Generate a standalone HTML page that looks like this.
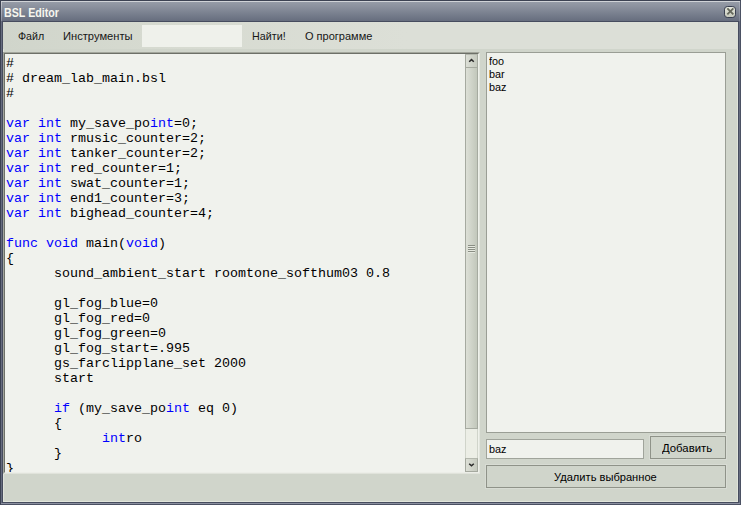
<!DOCTYPE html>
<html><head><meta charset="utf-8">
<style>
html,body{margin:0;padding:0;}
body{width:741px;height:505px;overflow:hidden;position:relative;background:#d0d5cb;font-family:"Liberation Sans","DejaVu Sans",sans-serif;font-size:12px;color:#111;}
.abs{position:absolute;box-sizing:border-box;}
#frame{left:0;top:0;width:741px;height:505px;background:#3c4252;border:1px solid;border-color:#3c4252 #4b5163 #4b5163 #3c4252;}
#frame2{left:1px;top:1px;width:739px;height:503px;background:#666c7f;}
#frame3{left:2px;top:21px;width:737px;height:482px;background:#464c5e;}
#title{left:1px;top:1px;width:739px;height:20px;background:linear-gradient(#d0d3d7 0,#d0d3d7 1px,#969ca7 1px,#8a909d 6px,#666d7e 100%);}
#tl{left:1px;top:2px;width:1px;height:19px;background:linear-gradient(#c4c7cd,#8a8fa0);}
#tr{left:739px;top:2px;width:1px;height:19px;background:linear-gradient(#aaaeb8,#7d8394);}
#bl{left:1px;top:503px;width:739px;height:1px;background:#8b90a0;}
#titletext{left:4px;top:6px;color:#f6f6ee;font-weight:bold;font-size:12px;line-height:15px;white-space:nowrap;transform:scaleX(0.89);transform-origin:0 0;}
#close{left:724px;top:6px;width:12px;height:12px;border:1px solid #3a4051;border-radius:3.5px;background:linear-gradient(#e6e8de,#d2d5c9 60%,#c4c7bb);}
#client{left:3px;top:22px;width:735px;height:480px;background:#d0d5cb;border:1px solid;border-color:#e2e5dd #dfe3d9 #e2e6dc #e0e3da;}
#menu{left:3px;top:22px;width:735px;height:27px;background:linear-gradient(90deg,#d0d5cb 0,#d6dad0 20%,#dcdfd7 55%,#dcdfd7 100%);}
.mi{top:29px;font-size:11.5px;line-height:15px;white-space:nowrap;color:#161616;transform-origin:0 0;}
#mbox{left:142px;top:25px;width:100px;height:22px;background:#eff1eb;}
#editor{left:3px;top:52px;width:477px;height:422px;background:#f0f2ed;border:1px solid;border-color:#a3a69c #e2e5dd #e0e3db #a3a69c;}
#editor2{left:4px;top:53px;width:475px;height:420px;border:1px solid;border-color:#6d7068 #eff1eb #eceee8 #6d7068;}
#code{left:6px;top:56px;margin:0;font-family:"Liberation Mono","DejaVu Sans Mono",monospace;font-size:13.33px;line-height:15px;color:#000;white-space:pre;tab-size:6;-moz-tab-size:6;height:416px;overflow:hidden;}
#code b{font-weight:normal;color:#0000ff;}
#sb{left:465px;top:54px;width:13px;height:418px;background:#eceee6;border:1px solid;border-color:#e6e9e1 #d0d4ca;border-width:0 1px;}
.sbtn{left:465px;width:13px;height:14px;background:linear-gradient(90deg,#dcdfd6,#c6cabf);border:1px solid #a5a99f;border-top-color:#b4b8ae;}
#thumb{left:465px;top:67px;width:13px;height:362px;background:linear-gradient(90deg,#dde0d7,#c2c7bb);border:1px solid #a6aaa0;}
.grip{left:468px;width:7px;height:1px;background:#8a8e84;box-shadow:0 1px 0 #e6e9e0;}
#list{left:486px;top:52px;width:240px;height:381px;background:#f0f2ed;border:1px solid #9a9e95;}
.li{left:489px;font-size:11.5px;line-height:13px;color:#000;white-space:nowrap;transform:scaleX(0.94);transform-origin:0 0;}
#inp{left:486px;top:439px;width:158px;height:20px;background:#f0f2ed;border:1px solid #a0a49b;}
.btn{border:1px solid #8f9389;background:#d0d5cb;box-shadow:0 0 0 1px rgba(255,255,255,0.18);}
.bt{font-size:11px;line-height:13px;color:#000;white-space:nowrap;transform-origin:0 0;}
</style></head><body>
<div class="abs" id="frame"></div>
<div class="abs" id="frame2"></div>
<div class="abs" id="frame3"></div>
<div class="abs" id="title"></div>
<div class="abs" id="tl"></div>
<div class="abs" id="tr"></div>
<div class="abs" id="bl"></div>
<div class="abs" id="titletext">BSL Editor</div>
<div class="abs" id="close"><svg width="10" height="10" viewBox="0 0 10 10" style="position:absolute;left:0;top:0"><path d="M2.35 1.45 L8.35 7.45 M8.35 1.45 L2.35 7.45" stroke="#64675b" stroke-width="1.8" fill="none"/></svg></div>
<div class="abs" id="client"></div>
<div class="abs" id="menu"></div>
<div class="abs mi" style="left:18px;transform:scaleX(0.929)">Файл</div>
<div class="abs mi" style="left:63px;transform:scaleX(0.97)">Инструменты</div>
<div class="abs" id="mbox"></div>
<div class="abs mi" style="left:252px;transform:scaleX(0.934)">Найти!</div>
<div class="abs mi" style="left:305px;transform:scaleX(0.957)">О программе</div>
<div class="abs" id="editor"></div>
<div class="abs" id="editor2"></div>
<pre class="abs" id="code">#
# dream_lab_main.bsl
#

<b>var</b> <b>int</b> my_save_po<b>int</b>=0;
<b>var</b> <b>int</b> rmusic_counter=2;
<b>var</b> <b>int</b> tanker_counter=2;
<b>var</b> <b>int</b> red_counter=1;
<b>var</b> <b>int</b> swat_counter=1;
<b>var</b> <b>int</b> end1_counter=3;
<b>var</b> <b>int</b> bighead_counter=4;

<b>func</b> <b>void</b> main(<b>void</b>)
{
	sound_ambient_start roomtone_softhum03 0.8

	gl_fog_blue=0
	gl_fog_red=0
	gl_fog_green=0
	gl_fog_start=.995
	gs_farclipplane_set 2000
	start

	<b>if</b> (my_save_po<b>int</b> eq 0)
	{
		<b>int</b>ro
	}
}</pre>
<div class="abs" id="sb"></div>
<div class="abs sbtn" style="top:54px"></div>
<div class="abs" id="thumb"></div>
<div class="abs grip" style="top:245px"></div>
<div class="abs grip" style="top:247px"></div>
<div class="abs grip" style="top:249px"></div>
<div class="abs grip" style="top:251px"></div>
<div class="abs sbtn" style="top:458px"></div>
<svg class="abs" style="left:465px;top:54px" width="13" height="418" viewBox="0 0 13 418"><path d="M4.2 7.7 L6.5 5.6 L8.8 7.7" stroke="#2a2a2a" stroke-width="1.5" fill="none"/><path d="M4.2 409.7 L6.5 411.8 L8.8 409.7" stroke="#2a2a2a" stroke-width="1.5" fill="none"/></svg>
<div class="abs" id="list"></div>
<div class="abs li" style="top:55px">foo</div>
<div class="abs li" style="top:68px">bar</div>
<div class="abs li" style="top:81px">baz</div>
<div class="abs" id="inp"></div>
<div class="abs li" style="left:489px;top:443px">baz</div>
<div class="abs btn" style="left:650px;top:436px;width:76px;height:23px"></div>
<div class="abs bt" style="left:662px;top:442px;transform:scaleX(1.03)">Добавить</div>
<div class="abs btn" style="left:486px;top:465px;width:240px;height:23px"></div>
<div class="abs bt" style="left:554px;top:471px;transform:scaleX(1.01)">Удалить выбранное</div>
</body></html>
